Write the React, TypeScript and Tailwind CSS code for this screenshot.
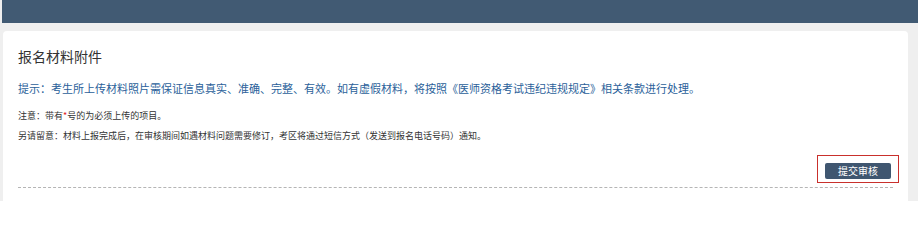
import React from "react";

const App = () => {
  return (
    <div
      className="w-[918px] h-[201px] overflow-hidden bg-[#efefef]"
      style={{ fontFamily: '"Noto Sans CJK SC", "Noto Sans", sans-serif' }}
    >
      {/* top bar */}
      <div className="h-[23px] ml-[2px] bg-[#415a73]" />

      <div className="pt-[8px] pl-[3px] pr-[10px]">
        <div className="bg-white rounded-[4px] pt-[15px] pl-[15px] pr-[15px] h-[200px]">
          <h2 className="text-[14px] leading-[20px] text-[#333]">报名材料附件</h2>

          <p className="mt-[14px] text-[11px] leading-[16px] text-[#2b5f9a]">
            提示：考生所上传材料照片需保证信息真实、准确、完整、有效。如有虚假材料，将按照《医师资格考试违纪违规规定》相关条款进行处理。
          </p>

          <p className="mt-[13px] text-[9px] leading-[14px] text-[#333]">
            注意：带有<span className="text-[#e02020]">*</span>号的为必须上传的项目。
          </p>
          <p className="mt-[6px] text-[9px] leading-[14px] text-[#333]">
            另请留意：材料上报完成后，在审核期间如遇材料问题需要修订，考区将通过短信方式（发送到报名电话号码）通知。
          </p>

          {/* submit */}
          <div className="mt-[12px] -mr-[6px] flex justify-end">
            <div className="flex border border-[#c9302c] pt-[7px] pb-[3px] px-[7px]">
              <button className="block w-[66px] h-[16px] rounded-[2px] bg-[#3f5670] text-white text-[10px] leading-[16px]">
                提交审核
              </button>
            </div>
          </div>

          <div className="mt-[4px] border-t border-dashed border-[#b5b5b5]" />
        </div>
      </div>
    </div>
  );
};

export default App;
